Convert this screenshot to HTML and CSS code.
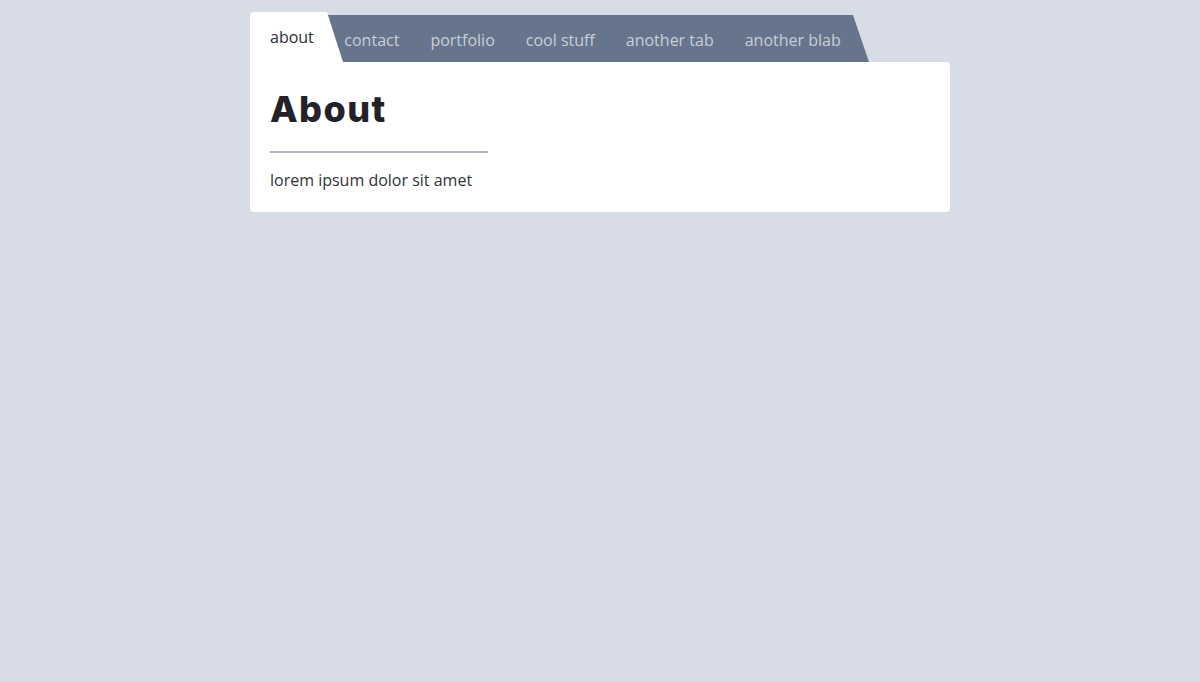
FILE: index.html
```html
<!DOCTYPE html>
<html lang="en">
<head>
<meta charset="utf-8">
<title>Tabs</title>
<link rel="stylesheet" href="styles.css">
</head>
<body>
<div class="wrap">
  <nav class="tabs">
    <a class="tab active">about</a>
    <a class="tab first">contact</a>
    <a class="tab">portfolio</a>
    <a class="tab">cool stuff</a>
    <a class="tab">another tab</a>
    <a class="tab">another blab</a>
  </nav>
  <section class="card">
    <h1 class="title">About</h1>
    <div class="rule"></div>
    <p class="text">lorem ipsum dolor sit amet</p>
  </section>
</div>
</body>
</html>
```
FILE: styles.css
```css
html, body {
  margin: 0;
  padding: 0;
  background: #d8dce7;
}
body {
  font-family: "Open Sans", "Liberation Sans", sans-serif;
  font-size: 16px;
}
.wrap {
  width: 700px;
  margin: 12px auto 0;
}
.tabs {
  position: relative;
  display: flex;
  align-items: flex-start;
  height: 50px;
}
.tabs::before {
  content: "";
  position: absolute;
  left: 0;
  top: 3px;
  width: 619px;
  height: 47px;
  background: #66758c;
  clip-path: polygon(0 0, 603px 0, 619px 47px, 0 47px);
}
.tab {
  position: relative;
  display: block;
  padding: 3px 15.5px 0;
  line-height: 44px;
  margin-top: 3px;
  color: #c9ced9;
  white-space: nowrap;
}
.tab.first {
  margin-left: 2px;
}
.tab.active {
  padding: 0 13px 0 20px;
  margin-top: 0;
  line-height: 50px;
  color: #2c2c33;
  z-index: 1;
}
.tab.active::before {
  content: "";
  position: absolute;
  left: 0;
  top: 0;
  width: 93px;
  height: 50px;
  background: #fff;
  border-top-left-radius: 4px;
  clip-path: polygon(0 0, 77px 0, 93px 50px, 0 50px);
  z-index: -1;
}
.card {
  background: #fff;
  border-radius: 0 4px 4px 4px;
  padding: 25px 20px 20px;
}
.title {
  margin: 0;
  font-family: "Inter", "DejaVu Sans", sans-serif;
  font-weight: 800;
  font-size: 36px;
  line-height: 44px;
  letter-spacing: 1.4px;
  color: #222228;
}
.rule {
  width: 218px;
  height: 2px;
  background: #aab3c0;
  margin-top: 20px;
}
.text {
  margin: 15px 0 0;
  line-height: 24px;
  color: #333338;
}
```
